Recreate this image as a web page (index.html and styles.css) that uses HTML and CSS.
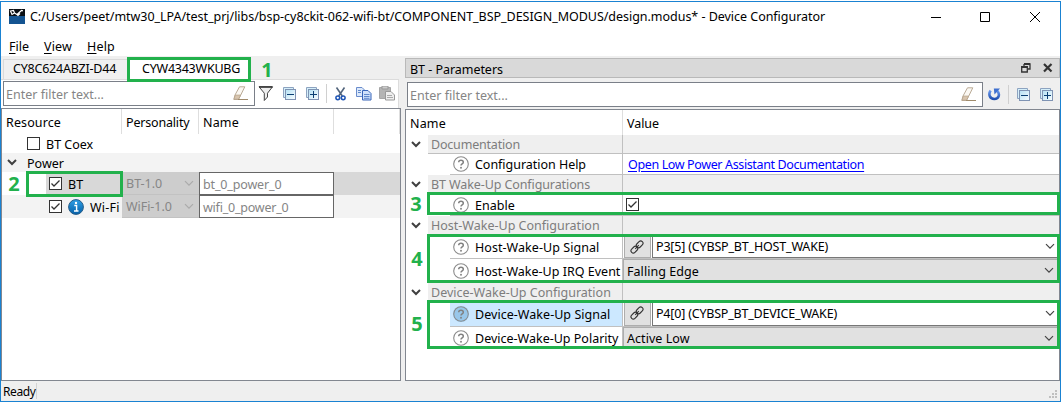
FILE: index.html
```html
<!DOCTYPE html>
<html lang="en">
<head>
<meta charset="utf-8">
<title>Device Configurator</title>
<link rel="stylesheet" href="styles.css">
</head>
<body>
<svg class="defs" aria-hidden="true">
  <defs>
    <linearGradient id="gPaper" x1="0" y1="0" x2="1" y2="1"><stop offset="0" stop-color="#b4e0f3"/><stop offset="1" stop-color="#f8fdff"/></linearGradient>
    <linearGradient id="gInfo" x1="0" y1="0" x2="0" y2="1"><stop offset="0" stop-color="#2f9fe6"/><stop offset="1" stop-color="#0560a8"/></linearGradient>
    <linearGradient id="gUndo" x1="0" y1="0" x2="0" y2="1"><stop offset="0" stop-color="#6d9cf0"/><stop offset="1" stop-color="#1f4fb0"/></linearGradient>
    <symbol id="collapse" viewBox="0 0 14 14"><path d="M.5 10.500V.5H10.500V2.500H2.500V10.500Z" fill="#d5effa" stroke="#8da3c0"/><rect x="2.500" y="2.500" width="10" height="10" fill="url(#gPaper)" stroke="#7f93b3"/><path d="M4 7.500H11" stroke="#0b3f73"/></symbol>
    <symbol id="expand" viewBox="0 0 14 14"><path d="M.5 10.500V.5H10.500V2.500H2.500V10.500Z" fill="#d5effa" stroke="#8da3c0"/><rect x="2.500" y="2.500" width="10" height="10" fill="url(#gPaper)" stroke="#7f93b3"/><path d="M4 7.500H11M7.500 4V11" stroke="#0b3f73"/></symbol>
    <symbol id="eraser" viewBox="0 0 16 15"><path d="M6.500 .8H11.800L7.500 9.500L5.500 13.500H.8L2 9Z" fill="#fbf8f3" stroke="#b9aa96"/><path d="M2.300 9H7.700L5.500 13.200H1Z" fill="#d8c5ae" stroke="#b09b82" stroke-width=".6"/><path d="M5 13.500H15" stroke="#a08b6c"/></symbol>
    <symbol id="chev" viewBox="0 0 10 7"><path d="M1 1.200L5 5.200L9 1.200" fill="none" stroke="currentColor" stroke-width="1.200"/></symbol>
    <symbol id="tree" viewBox="0 0 10 7"><path d="M1 1L5 5L9 1" fill="none" stroke="#404040" stroke-width="2"/></symbol>
    <symbol id="help" viewBox="0 0 16 16"><circle cx="8" cy="8" r="7.300" fill="none" stroke="#8b8b8b" stroke-width="1.100"/><path d="M5.700 6.300C5.700 3.400 10.300 3.500 10.300 6.200C10.300 7.900 8 7.800 8 9.600" fill="none" stroke="#808080" stroke-width="1.500"/><circle cx="8" cy="11.700" r=".95" fill="#808080"/></symbol>
    <symbol id="checked" viewBox="0 0 13 13"><rect x=".5" y=".5" width="12" height="12" fill="#fff" stroke="#333"/><path d="M2.500 6.500L5 9L10.500 3.500" fill="none" stroke="#333" stroke-width="1.300"/></symbol>
    <symbol id="link" viewBox="0 0 14 14"><g fill="none" stroke="#333" stroke-width="1.100" transform="rotate(-45 7 7)"><rect x="-.5" y="4.700" width="7.500" height="4.600" rx="2.300"/><rect x="7" y="4.700" width="7.500" height="4.600" rx="2.300"/><path d="M4.500 7H9.500"/></g></symbol>
  </defs>
</svg>
<div class="window">
  <header class="titlebar">
    <svg class="logo" viewBox="0 0 16 15"><path fill="#0a0f14" d="M0 0H16V7H0Z"/><path fill="#145491" d="M0 7H16V15H0Z"/><path d="M1.500 2L4.500 1.500L5.500 4L3 5.500ZM5.500 4L8 5.500L12.500 1.500L14 1.800M8 5.500L9 6.500L11 4.500" fill="none" stroke="#fff" stroke-width="1.200"/></svg>
    <span class="title">C:/Users/peet/mtw30_LPA/test_prj/libs/bsp-cy8ckit-062-wifi-bt/COMPONENT_BSP_DESIGN_MODUS/design.modus* - Device Configurator</span>
    <svg class="controls" viewBox="0 0 110 11"><path d="M0 6.500H10M49.500 1.500H58.500V10.500H49.500Z M99 1L109 11M109 1L99 11" fill="none" stroke="#000"/></svg>
  </header>
  <nav class="menu"><span class="m-file"><u>F</u>ile</span><span class="m-view"><u>V</u>iew</span><span class="m-help"><u>H</u>elp</span></nav>
  <div class="main">
    <section class="left">
      <div class="tabs">
        <div class="tab first">CY8C624ABZI-D44</div>
        <div class="tab active">CYW4343WKUBG</div>
      </div>
      <div class="toolbar">
        <div class="filter"><span>Enter filter text...</span><svg class="eraser"><use href="#eraser"/></svg></div>
        <svg class="funnel" viewBox="0 0 16 16"><path d="M1 .8H14.500L9.500 7.200V11L6.300 14.500V7.200Z" fill="#eee" stroke="#444"/><path d="M1 1H14.500" stroke="#333" stroke-width="1.500"/></svg>
        <svg class="box a"><use href="#collapse"/></svg>
        <svg class="box b"><use href="#expand"/></svg>
        <i class="sep"></i>
        <svg class="cut" viewBox="0 0 11 14"><path d="M1.500 .5L7.300 9M9.500 .5L3.700 9" fill="none" stroke="#54667d" stroke-width="1.600"/><circle cx="2.800" cy="10.800" r="1.900" fill="none" stroke="#1f55b5" stroke-width="1.500"/><circle cx="8.200" cy="10.800" r="1.900" fill="none" stroke="#1f55b5" stroke-width="1.500"/></svg>
        <svg class="copy" viewBox="0 0 16 14"><path d="M.5 .5H6L8.500 3V9.500H.5Z" fill="#dce9fb" stroke="#6a8ccc"/><path d="M6.500 3.500H12L15 6.500V13H6.500Z" fill="#cfe1fb" stroke="#3865b8"/><path d="M2 3.500H5M2 5.500H5M8 7.500H13.500M8 9.500H13.500M8 11.300H13.500" stroke="#5f88cb"/></svg>
        <svg class="paste" viewBox="0 0 16 15"><path d="M.5 1.500H11.500V12.500H.5Z" fill="#b4b4b4" stroke="#a5a5a5"/><path d="M3 0H9V3H3Z" fill="#ccc" stroke="#999"/><path d="M6.500 5.500H12L15.500 9V14H6.500Z" fill="#eee" stroke="#999"/><path d="M8 9.500H13M8 11.500H14" stroke="#aaa"/></svg>
      </div>
      <div class="tree resources">
        <div class="head"><span class="c1 t-resource">Resource</span><span class="c2 t-personality">Personality</span><span class="c3 t-name">Name</span><span class="c4"></span></div>
        <div class="row coex"><i class="unchecked"></i><span class="t-coex">BT Coex</span></div>
        <div class="row power"><svg class="arrow"><use href="#tree"/></svg><span class="t-power">Power</span></div>
        <div class="row item selected"><div class="c1"><svg class="check"><use href="#checked"/></svg><span>BT</span></div><div class="c2 t-bt1"><span>BT-1.0</span><svg class="chev"><use href="#chev"/></svg></div><div class="c3 t-btn">bt_0_power_0</div></div>
        <div class="row item shaded"><div class="c1"><svg class="check"><use href="#checked"/></svg><svg class="info" viewBox="0 0 16 16"><circle cx="8" cy="8" r="7.400" fill="url(#gInfo)" stroke="#275d88"/><path d="M6.300 6.500H8.600V12M6 12H10.500" fill="none" stroke="#fff" stroke-width="1.400"/><circle cx="8" cy="3.900" r="1.200" fill="#fff"/></svg><span class="t-wifi">Wi-Fi</span></div><div class="c2 t-wifi1"><span>WiFi-1.0</span><svg class="chev"><use href="#chev"/></svg></div><div class="c3 t-wifin">wifi_0_power_0</div></div>
      </div>
    </section>
    <section class="right">
      <div class="dock"><span>BT - Parameters</span>
        <svg class="dockicons" viewBox="0 0 32 10"><path d="M3 1H9V6H7M3 1V3M.7 3.700H6.300V9H.7Z" fill="none" stroke="#333" stroke-width="1.300"/><path d="M3 1H9M.5 4H6.500" stroke="#333" stroke-width="2"/><path d="M23 1L30.500 8.500M30.500 1L23 8.500" stroke="#333" stroke-width="2.200"/></svg>
      </div>
      <div class="toolbar">
        <div class="filter"><span>Enter filter text...</span><svg class="eraser"><use href="#eraser"/></svg></div>
        <svg class="undo" viewBox="0 0 13 13"><path d="M2.600 2.500C.2 6 1.500 11 6.300 11C11 11 12.200 6 9.300 2.800" fill="none" stroke="url(#gUndo)" stroke-width="2.600"/><path d="M5.800 .5H12L6.500 6.500Z" fill="#3f70cf"/></svg>
        <i class="sep"></i>
        <svg class="box a"><use href="#collapse"/></svg>
        <svg class="box b"><use href="#expand"/></svg>
      </div>
      <div class="tree params">
        <div class="head"><span class="n t-name">Name</span><span class="v t-value">Value</span></div>
        <div class="group g1"><svg class="arrow"><use href="#tree"/></svg><div class="n t-doc">Documentation</div><div class="v"></div></div>
        <div class="param p1"><div class="n"><svg class="help"><use href="#help"/></svg><span class="t-chelp">Configuration Help</span></div><div class="v"><a class="t-link">Open Low Power Assistant Documentation</a></div></div>
        <div class="group g2"><svg class="arrow"><use href="#tree"/></svg><div class="n t-btw">BT Wake-Up Configurations</div><div class="v"></div></div>
        <div class="param p2"><div class="n"><svg class="help"><use href="#help"/></svg><span class="t-enable">Enable</span></div><div class="v"><svg class="check"><use href="#checked"/></svg></div></div>
        <div class="group g3"><svg class="arrow"><use href="#tree"/></svg><div class="n t-host">Host-Wake-Up Configuration</div><div class="v"></div></div>
        <div class="param p3"><div class="n"><svg class="help"><use href="#help"/></svg><span class="t-hsig">Host-Wake-Up Signal</span></div><div class="v"><i class="link"><svg><use href="#link"/></svg></i><div class="combo pin t-p3"><span>P3[5] (CYBSP_BT_HOST_WAKE)</span><svg class="chev"><use href="#chev"/></svg></div></div></div>
        <div class="param p4"><div class="n"><svg class="help"><use href="#help"/></svg><span class="t-irq">Host-Wake-Up IRQ Event</span></div><div class="v"><div class="combo flat t-fall"><span>Falling Edge</span><svg class="chev"><use href="#chev"/></svg></div></div></div>
        <div class="group g4"><svg class="arrow"><use href="#tree"/></svg><div class="n t-dev">Device-Wake-Up Configuration</div><div class="v"></div></div>
        <div class="param p5 current"><div class="n"><svg class="help"><use href="#help"/></svg><span class="t-dsig">Device-Wake-Up Signal</span></div><div class="v"><i class="link"><svg><use href="#link"/></svg></i><div class="combo pin t-p4"><span>P4[0] (CYBSP_BT_DEVICE_WAKE)</span><svg class="chev"><use href="#chev"/></svg></div></div></div>
        <div class="param p6"><div class="n"><svg class="help"><use href="#help"/></svg><span class="t-pol">Device-Wake-Up Polarity</span></div><div class="v"><div class="combo flat t-act"><span>Active Low</span><svg class="chev"><use href="#chev"/></svg></div></div></div>
      </div>
    </section>
  </div>
  <footer class="status"><span>Ready</span><svg class="grip" viewBox="0 0 8 8"><path d="M6 0H8V2H6ZM3 3H5V5H3ZM6 3H8V5H6ZM0 6H2V8H0ZM3 6H5V8H3ZM6 6H8V8H6Z" fill="#bfbfbf"/></svg></footer>
</div>
<div class="mark k1"></div><div class="mark k2"></div><div class="mark k3"></div><div class="mark k4"></div><div class="mark k5"></div>
<b class="num n1">1</b><b class="num n2">2</b><b class="num n3">3</b><b class="num n4">4</b><b class="num n5">5</b>
</body>
</html>
```
FILE: styles.css
```css
* { box-sizing: border-box; }
body { margin: 0; position: relative; width: 1062px; height: 403px; overflow: hidden; background: #fff; color: #000; font: 12.5px/18px "Noto Sans", "Open Sans", sans-serif; white-space: nowrap; }
svg { display: block; flex: none; }
i { display: block; flex: none; }
.defs { position: absolute; width: 0; height: 0; }
.window { display: flex; flex-direction: column; width: 1061px; height: 401px; margin-top: 1px; border: 1px solid #1a82d2; background: #efefef; }

.titlebar { display: flex; height: 34px; padding-left: 8px; background: #fff; }
.logo { width: 16px; height: 15px; margin-top: 7px; }
.title { width: 795px; margin: 6px 0 0 5px; letter-spacing: -.03px; }
.controls { width: 110px; height: 11px; margin: 9px 0 0 106px; }
.menu { display: flex; height: 20px; padding: 2px 0 0 8px; background: #fff; }
.menu u { text-underline-offset: 2px; }
.m-file { width: 35px; }
.m-view { width: 43px; letter-spacing: .16px; }
.m-help { letter-spacing: .19px; }

.main { display: flex; height: 325px; }
.left { width: 400px; margin-right: 3px; }
.tabs { display: flex; height: 23px; padding: 3px 0 0 2px; }
.tab { height: 20px; background: #f0f0f0; border: 1px solid #dadada; border-bottom: 0; }
.tab.first { width: 125px; padding-left: 9px; letter-spacing: -.22px; }
.tab.active { width: 123px; padding-left: 13px; background: #fff; border-color: #fff; letter-spacing: -.24px; }
.left .toolbar { display: flex; align-items: center; width: 398px; height: 29px; padding: 0 0 1px 2px; background: #fff; border: 1px solid #dcdcdc; border-left: 0; border-bottom: 0; }
.filter { display: flex; flex: none; align-items: center; justify-content: space-between; height: 25px; padding-left: 2px; background: #fff; border: 1px solid #7a7f88; color: #858585; }
.eraser { width: 16px; height: 15px; margin-right: 5px; }
.left .filter { width: 252px; }
.funnel { width: 16px; height: 16px; margin-left: 3px; }
.box { width: 14px; height: 14px; }
.left .a { margin-left: 9px; }
.left .b { margin-left: 9px; }
.sep { width: 1px; height: 19px; background: #d0d0d0; }
.left .sep { margin-left: 6px; }
.cut { width: 11px; height: 14px; margin-left: 8px; }
.copy { width: 16px; height: 14px; margin-left: 10px; }
.paste { width: 16px; height: 15px; margin-left: 7px; }

.tree { height: 273px; background: #fff; border: 1px solid #828790; }
.resources { width: 400px; }
.head { display: flex; height: 25px; line-height: 27px; }
.head span { border-right: 1px solid #dedede; }
.resources .c1 { width: 120px; flex: none; }
.resources .c2 { width: 77px; flex: none; }
.resources .c3 { width: 135px; flex: none; }
.head .c4 { width: 66px; }
.resources .head .c1 { padding-left: 4px; }
.resources .head .c2, .resources .head .c3 { padding-left: 4px; }
.row { display: flex; align-items: center; height: 19px; }
.row span, .filter span, .param span, .param a { position: relative; top: 1px; }
.coex { padding-left: 25px; }
.unchecked { width: 13px; height: 13px; margin-right: 6px; border: 1px solid #333; }
.power { background: #f3f3f3; padding-left: 5px; }
.arrow { width: 10px; height: 7px; flex: none; }
.power .arrow { margin-right: 10px; }
.item { height: 23px; }
.selected { background: #d8d8d8; }
.shaded { background: #f3f3f3; }
.item .c1 { display: flex; align-items: center; height: 23px; padding-left: 47px; }
.selected .c1 { background: linear-gradient(90deg, #fff 44px, #d8d8d8 44px); }
.check { width: 13px; height: 13px; margin-right: 6px; }
.info { width: 16px; height: 16px; margin-right: 6px; }
.item .c2 { display: flex; align-items: center; justify-content: space-between; height: 23px; padding: 0 5px 0 4px; background: #cdcdcd; border: 1px solid #c2c2c2; border-width: 0 0 1px; color: #868686; }
.item .c3 { height: 23px; padding-left: 3px; line-height: 23px; background: #fff; border: 1px solid #666; color: #858585; }
.chev { width: 10px; height: 7px; color: #444; }
.item .chev { color: #aaa; }

.right { width: 655px; margin-left: 1px; }
.dock { display: flex; justify-content: space-between; width: 655px; height: 20px; margin-top: 2px; padding: 0 12px 0 4px; background: #d9d9d9; border: 1px solid #b9b9b9; letter-spacing: -.04px; line-height: 21px; }
.dockicons { width: 32px; height: 10px; margin: 4px -6px 0 0; }
.right .toolbar { display: flex; align-items: center; height: 31px; padding: 2px 0 0 2px; }
.right .filter { width: 576px; }
.undo { width: 13px; height: 13px; margin-left: 5px; }
.right .sep { margin-left: 7px; }
.right .a { margin-left: 8px; }
.right .b { margin-left: 9px; }
.params { width: 655px; height: 272px; }
.params .head .n { width: 217px; padding-left: 4px; }
.params .head .v { padding-left: 4px; border: 0; }
.group { display: flex; }
.group .arrow { margin: 6px 7px 0 5px; }
.group .n { width: 195px; padding-left: 3px; line-height: 20px; color: #7d7d7d; background: #efefef; border: solid #c0c0c0; border-width: 0 1px 1px 0; }
.group .v { flex: 1; background: #efefef; border-bottom: 1px solid #c0c0c0; }
.g1 { height: 19px; }
.g2 { height: 19px; }
.g3 { height: 19px; }
.g4 { height: 18px; }
.param { display: flex; padding-left: 44px; }
.param .n { display: flex; align-items: center; width: 173px; padding-left: 3px; border: solid #c0c0c0; border-width: 0 1px 1px 0; }
.param .v { display: flex; flex: 1; align-items: center; border-bottom: 1px solid #c0c0c0; }
.help { width: 16px; height: 16px; margin-right: 6px; }
.p1 { height: 21px; }
.p1 a { margin-left: 5px; color: #00f; text-decoration: underline; text-underline-offset: 2px; }
.p2 { height: 22px; }
.p2 .check { margin-left: 3px; }
.p3 { height: 24px; }
.p4 { height: 24px; }
.p5 { height: 26px; }
.p6 { height: 22px; }
.p6 .n, .p6 .v { border-bottom: 0; }
.param .link { width: 27px; align-self: stretch; margin-left: 1px; padding: 4px 0 0 5px; background: #e1e1e1; border: 1px solid #adadad; }
.link svg { width: 14px; height: 14px; }
.combo { display: flex; flex: 1; align-items: center; align-self: stretch; justify-content: space-between; padding-right: 4px; }
.combo.pin { margin-left: 1px; padding-left: 3px; border: solid #777; border-width: 0 0 1px 1px; }
.combo.flat { padding-left: 3px; background: #e1e1e1; border: 1px solid #adadad; }
.current .n { background: #cce8ff; }
.current .n .help { background: #98c7ea; border-radius: 50%; }

.status { display: flex; justify-content: space-between; height: 20px; padding: 2px 3px 0 2px; }
.status span { width: 34px; height: 16px; border-right: 1px solid #d4d4d4; font-size: 12px; letter-spacing: -.4px; }
.grip { width: 8px; height: 8px; margin-top: 7px; }

/* Callout frames and numbers drawn over the window */
.mark { position: absolute; border: 3px solid #22b14c; }
.k1 { left: 127px; top: 57px; width: 124px; height: 25px; }
.k2 { left: 26px; top: 171px; width: 97px; height: 26px; }
.k3 { left: 427px; top: 192px; width: 633px; height: 23px; }
.k4 { left: 427px; top: 234px; width: 633px; height: 49px; }
.k5 { left: 427px; top: 300px; width: 633px; height: 49px; }
.num { position: absolute; width: 14px; color: #22b14c; font: bold 20px/24px "Noto Sans", sans-serif; text-align: center; }
.n1 { left: 260px; top: 58px; }
.n2 { left: 7px; top: 172px; }
.n3 { left: 409px; top: 192px; }
.n4 { left: 410px; top: 247px; }
.n5 { left: 410px; top: 312px; }

/* Letter spacing per label */
.t-resource { letter-spacing: .12px; }
.t-personality { letter-spacing: -.18px; }
.t-name { letter-spacing: .18px; }
.t-wifi { letter-spacing: .2px; }
.t-wifi1 { letter-spacing: -.05px; }
.t-btn { letter-spacing: -.15px; }
.t-wifin { letter-spacing: -.22px; }
.t-value { letter-spacing: -.05px; }
.t-doc { letter-spacing: -.19px; }
.t-chelp { letter-spacing: -.03px; }
.t-link { letter-spacing: -.37px; }
.t-btw { letter-spacing: -.1px; }
.t-enable { letter-spacing: .05px; }
.t-hsig { letter-spacing: .05px; }
.t-irq { letter-spacing: .01px; }
.t-fall { letter-spacing: .06px; }
.t-p3 { letter-spacing: -.18px; }
.t-p4 { letter-spacing: -.2px; }
.t-dsig { letter-spacing: .04px; }
.t-act { letter-spacing: .05px; }
```
